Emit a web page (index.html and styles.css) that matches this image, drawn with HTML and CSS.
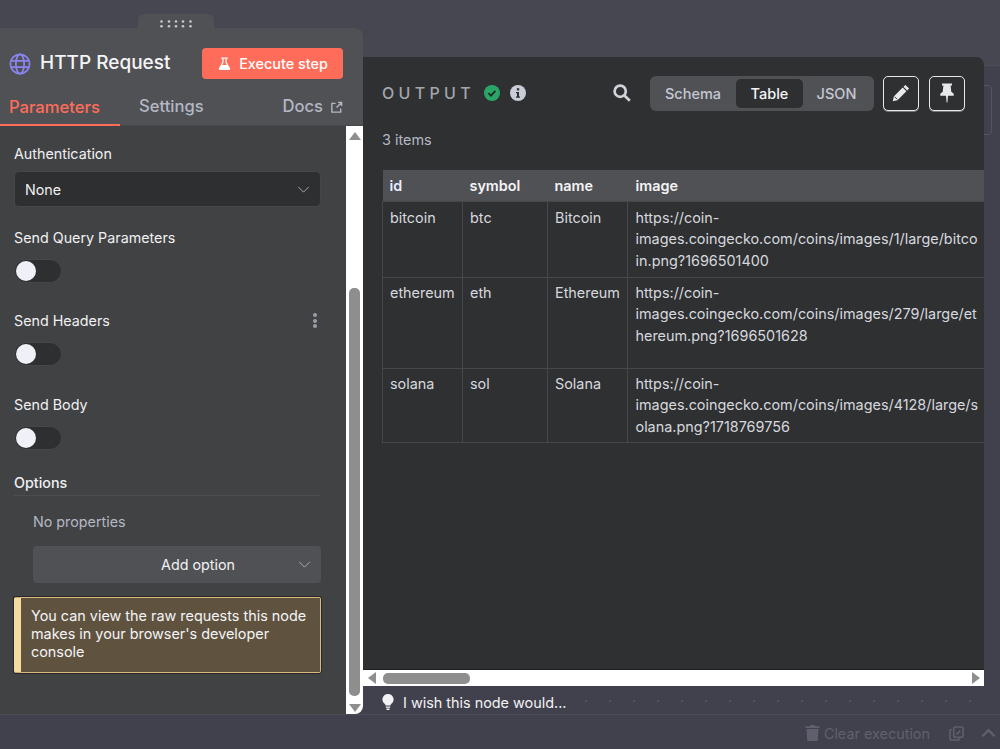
FILE: index.html
```html
<!DOCTYPE html>
<html lang="en">
<head>
<meta charset="utf-8">
<title>HTTP Request</title>
<link rel="stylesheet" href="styles.css">
</head>
<body>
<div class="app">
  <div class="canvas">
    <div class="side-line"></div>
    <div class="side-box"></div>
    <aside class="params">
      <div class="handle"><svg viewBox="0 0 32 8" fill="#c8c9cf"><circle cx="1.500" cy="1.500" r="1.300"/><circle cx="9" cy="1.500" r="1.300"/><circle cx="16" cy="1.500" r="1.300"/><circle cx="23" cy="1.500" r="1.300"/><circle cx="30.500" cy="1.500" r="1.300"/><circle cx="1.500" cy="6.300" r="1.300"/><circle cx="9" cy="6.300" r="1.300"/><circle cx="16" cy="6.300" r="1.300"/><circle cx="23" cy="6.300" r="1.300"/><circle cx="30.500" cy="6.300" r="1.300"/></svg></div>
      <div class="params-card">
        <header class="params-head">
          <div class="title-row">
            <svg class="globe" viewBox="0 0 24 24" fill="none" stroke="#8a84f0" stroke-width="1.900"><circle cx="12" cy="12" r="10.500"/><ellipse cx="12" cy="12" rx="4.500" ry="10.500"/><path d="M2.800 8.500h18.400M2.800 15.500h18.400"/></svg>
            <h1>HTTP Request</h1>
            <button class="exec"><svg viewBox="0 0 16 16" fill="#fff"><path d="M4.500 1h7v1.500h-7z"/><path d="M5.700 2.500h1.300v3.800L5.500 9h5L9 6.300V2.500h1.300v3.500l3.600 6.400c.6 1.100-.1 2.100-1.300 2.100H3.400c-1.200 0-1.900-1-1.300-2.100L5.700 6z"/></svg>Execute step</button>
          </div>
          <nav class="tabs">
            <span class="tab active">Parameters</span>
            <span class="tab">Settings</span>
            <span class="tab docs">Docs <svg viewBox="0 0 14 14" fill="none" stroke="#b4b8c4" stroke-width="1.500"><path d="M6 2.500H2v9.500h9.500V8M7 7l5.500-5.500M8.500 1.500h4v4"/></svg></span>
          </nav>
        </header>
        <div class="params-body">
          <div class="form">
            <label class="label label-first">Authentication</label>
            <div class="select"><span>None</span><svg class="chev" viewBox="0 0 14 8" fill="none" stroke="#b4b8c4" stroke-width="1"><path d="M1 1l6 6 6-6"/></svg></div>
            <label class="label label-query">Send Query Parameters</label>
            <div class="switch"><i></i></div>
            <div class="label label-row">Send Headers<span class="kebab"><i></i><i></i><i></i></span></div>
            <div class="switch"><i></i></div>
            <label class="label label-body">Send Body</label>
            <div class="switch"><i></i></div>
            <div class="options-title">Options</div>
            <div class="no-props">No properties</div>
            <div class="add-option"><span>Add option</span><svg class="chev" viewBox="0 0 14 8" fill="none" stroke="#b4b8c4" stroke-width="1"><path d="M1 1l6 6 6-6"/></svg></div>
            <div class="notice">You can view the raw requests this node makes in your browser's developer console</div>
          </div>
          <div class="vscroll">
            <div class="arrow-up"></div>
            <div class="vtrack"><div class="vthumb"></div></div>
            <div class="arrow-down"></div>
          </div>
        </div>
      </div>
    </aside>
    <main class="right">
      <section class="output">
        <div class="out-head">
          <span class="out-title">OUTPUT</span>
          <svg class="status" viewBox="0 0 16 16"><circle cx="8" cy="8" r="8" fill="#2aa568"/><path d="M4.500 8.200l2.400 2.400 4.500-4.800" fill="none" stroke="#1f2a24" stroke-width="1.800"/></svg>
          <svg class="status info" viewBox="0 0 16 16"><circle cx="8" cy="8" r="8" fill="#c9cdd8"/><rect x="6.900" y="3.200" width="2.300" height="2.300" fill="#2e2f31"/><path d="M6 7h3v4.500h1v1.200H6v-1.200h1V8.200H6z" fill="#2e2f31"/></svg>
          <svg class="search" viewBox="0 0 18 18" fill="none" stroke="#d0d3da" stroke-width="2.700"><circle cx="7.200" cy="7.200" r="5.600"/><path d="M11.200 11.200L16.800 16.800"/></svg>
          <div class="segment"><span>Schema</span><span class="on">Table</span><span>JSON</span></div>
          <button class="icon-btn"><svg class="pencil" viewBox="0 0 16 16" fill="#e8e9ec"><path d="M11.900.800l3.300 3.300-1.700 1.700-3.300-3.300zM9.500 3.200l3.300 3.300-7.900 7.900-4.200.9.900-4.200z"/><path d="M2.300 11.300l2.400 2.400" stroke="#2e2f31" stroke-width=".8" fill="none"/></svg></button>
          <button class="icon-btn"><svg class="pin" viewBox="0 0 16 20" fill="#e8e9ec"><path d="M3 .500h10v2h-1.400l.7 6.300 2.400 2v1.900H9l-.6 6.800h-.8L7 12.700H1.300v-1.900l2.400-2 .7-6.300H3z"/></svg></button>
        </div>
        <div class="count">3 items</div>
        <div class="table-wrap">
          <table>
            <thead><tr><th class="c1">id</th><th class="c2">symbol</th><th class="c3">name</th><th class="c4">image</th></tr></thead>
            <tbody>
              <tr class="r1"><td>bitcoin</td><td>btc</td><td>Bitcoin</td><td>https://coin-<br>images.coingecko.com/coins/images/1/large/bitco<br>in.png?1696501400</td></tr>
              <tr class="r2"><td>ethereum</td><td>eth</td><td>Ethereum</td><td>https://coin-<br>images.coingecko.com/coins/images/279/large/et<br>hereum.png?1696501628</td></tr>
              <tr class="r3"><td>solana</td><td>sol</td><td>Solana</td><td>https://coin-<br>images.coingecko.com/coins/images/4128/large/s<br>olana.png?1718769756</td></tr>
            </tbody>
          </table>
        </div>
        <div class="hscroll">
          <div class="arrow-left"></div>
          <div class="htrack"><div class="hthumb"></div></div>
          <div class="arrow-right"></div>
        </div>
      </section>
      <div class="wish">
        <svg viewBox="0 0 12 16" fill="#f2f2f4"><path d="M6 0a5.500 5.500 0 0 1 3.200 10c-.5.400-.7.900-.8 1.500H3.600c-.1-.6-.3-1.100-.8-1.500A5.500 5.500 0 0 1 6 0zM3.800 12.500h4.400v1.300H3.800zM4.500 14.500h3V16h-3z"/></svg>
        <span>I wish this node would...</span>
        <div class="dots"></div>
      </div>
    </main>
  </div>
  <footer class="footer">
    <svg class="trash" viewBox="0 0 14 16" fill="#5f606d"><path d="M5 0h4l.6 1.200H14v1.800H0V1.200h4.400zM1 4h12l-.8 12H1.800z"/></svg>
    <span class="clear">Clear execution</span>
    <svg class="copy" viewBox="0 0 16 16" fill="none" stroke="#5f606d" stroke-width="1.700"><rect x="5" y="1" width="10" height="11" rx="2"/><path d="M3 4H2a1 1 0 0 0-1 1v9a1 1 0 0 0 1 1h8a1 1 0 0 0 1-1v-1M8 9l4-4"/></svg>
    <svg class="caret" viewBox="0 0 16 10" fill="none" stroke="#5f606d" stroke-width="2.400"><path d="M1.500 8.500L8 2l6.500 6.500"/></svg>
  </footer>
</div>
</body>
</html>
```
FILE: styles.css
```css
* { box-sizing: border-box; }
html, body { margin: 0; padding: 0; }
body {
  width: 1000px; height: 749px; overflow: hidden;
  font-family: Inter, "Liberation Sans", sans-serif;
  background: #41414d; color: #f0f0f2;
}
.app { display: flex; flex-direction: column; height: 749px; }
.canvas {
  position: relative; display: flex; height: 714px;
  background: linear-gradient(#474752 65px, #41414d 65px);
}
.side-line { position: absolute; left: 984px; top: 65px; width: 16px; height: 1px; background: #4c4c59; }
.side-box {
  position: absolute; left: 978px; top: 85px; width: 14px; height: 50px;
  border: 1px solid #555562; border-radius: 4px;
}

/* left panel */
.params { width: 363px; padding-top: 14px; display: flex; flex-direction: column; flex: none; }
.handle {
  align-self: flex-start; margin-left: 138px; width: 76px; height: 14px;
  background: #505155; border-radius: 6px 6px 0 0;
  display: flex; justify-content: center; align-items: flex-end; padding-bottom: 0;
}
.handle svg { width: 32px; height: 8px; }
.params-card { flex: 1; display: flex; flex-direction: column; border-radius: 0 8px 0 0; overflow: hidden; background: #414244; }
.params-head { height: 98px; background: #505155; display: flex; flex-direction: column; border-bottom: 1px solid #46474a; }
.title-row { display: flex; align-items: center; height: 68px; padding: 3px 20px 0 9px; flex: none; }
.globe { width: 22px; height: 22px; flex: none; }
h1 { margin: 0 0 2px 9px; font-size: 19px; font-weight: 500; color: #f4f4f6; flex: 1; white-space: nowrap; }
.exec {
  width: 141px; height: 31px; border: 0; border-radius: 4px; background: #ff6d5a; color: #fff;
  font: 500 14.400px Inter, sans-serif; display: flex; align-items: center; justify-content: center; gap: 7px; padding: 0;
}
.exec svg { width: 15px; height: 16px; }
.tabs { flex: 1; display: flex; align-items: stretch; padding-right: 20px; font-size: 16.600px; font-weight: 500; color: #b4b8c4; }
.tab { display: flex; align-items: center; padding-bottom: 9px; }
.tab.active { width: 120px; padding-left: 9px; padding-bottom: 7px; color: #ff6d5a; border-bottom: 2px solid #ff6d5a; margin-bottom: -1px; }
.tab:nth-child(2) { margin-left: 19px; }
.docs { margin-left: auto; gap: 7px; }
.docs svg { width: 13px; height: 13px; margin-top: 2px; }
.params-body { flex: 1; display: flex; min-height: 0; }
.form { flex: 1; padding: 0 25px 0 14px; font-size: 14.300px; }
.label { display: flex; font-weight: 400; line-height: 17px; color: #f0f0f2; }
.label-first { margin-top: 19px; }
.select {
  margin-top: 9px; height: 36px; background: #2e2f30; border: 1px solid #46474a; border-radius: 5px;
  display: flex; align-items: center; justify-content: space-between; padding: 0 10px 0 10px; color: #f0f0f2;
}
.chev { width: 13px; height: 7px; }
.label-query { margin-top: 22px; }
.switch { margin-top: 13px; width: 48px; height: 24px; border-radius: 12px; background: #2e2f30; border: 1px solid #46474a; padding: 1px; }
.switch i { display: block; width: 20px; height: 20px; border-radius: 50%; background: #f0f0f8; }
.label-row { margin-top: 29px; justify-content: space-between; align-items: center; position: relative; }
.kebab { display: flex; flex-direction: column; gap: 1.500px; padding-right: 4px; }
.kebab i { width: 4px; height: 4px; border-radius: 50%; background: #9a9da8; }
.label-body { margin-top: 30px; }
.options-title { margin-top: 24px; padding-bottom: 4px; line-height: 17px; font-weight: 500; border-bottom: 1px solid #4c4d50; }
.no-props { margin: 17px 0 0 19px; line-height: 17px; color: #b4b8c4; }
.add-option {
  margin: 16px 0 0 19px; height: 37px; background: #505155; border-radius: 4px; position: relative;
  display: flex; align-items: center; justify-content: center; padding-left: 42px; color: #f0f0f2; font-weight: 400;
}
.add-option .chev { position: absolute; right: 10px; top: 15px; }
.notice {
  margin-top: 14px; height: 76px; padding: 9px 8px 0 10px;
  background: #5f5340; border: 1px solid #d9b97c; border-left: 7px solid #f6dba0; border-radius: 2px;
  font-size: 14.400px; line-height: 18px; color: #f4f4f6; box-shadow: 0 0 0 1px #26272a;
}
.vscroll { width: 17px; background: #fff; border-radius: 0 0 8px 0; display: flex; flex-direction: column; align-items: center; padding: 6px 0 2px; flex: none; }
.vtrack { flex: 1; width: 100%; display: flex; flex-direction: column; justify-content: flex-end; padding: 5px 3px 8px; }
.vthumb { width: 11px; height: 408px; background: #8e8e8e; border-radius: 5px; }
.arrow-up { width: 0; height: 0; border: 6px solid transparent; border-top: 0; border-bottom: 8px solid #8e8e8e; }
.arrow-down { width: 0; height: 0; border: 6px solid transparent; border-bottom: 0; border-top: 8px solid #8e8e8e; }

/* right panel */
.right { flex: none; width: 621px; padding-top: 57px; display: flex; flex-direction: column; position: relative; }
.output { height: 629px; background: #2f3032; border-radius: 0 8px 0 0; display: flex; flex-direction: column; }
.out-head { display: flex; align-items: center; height: 55px; padding: 17px 0 0 19px; position: relative; }
.out-title { font-size: 16px; font-weight: 500; letter-spacing: 4.300px; color: #a3a6ad; width: 102px; }
.status { width: 16px; height: 16px; flex: none; }
.info { margin-left: 10px; }
.search { width: 18px; height: 18px; margin-left: 87px; flex: none; }
.segment {
  margin-left: 19px; width: 224px; height: 35px; background: #505155; border-radius: 6px;
  display: grid; grid-template-columns: 86px 67px 67px; align-items: center; text-align: center;
  font-size: 14.500px; font-weight: 500; color: #c4c7d0; padding: 0; flex: none;
}
.segment span { line-height: 29px; }
.segment .on { background: #2e2f30; color: #f4f4f6; border-radius: 5px; }
.icon-btn {
  width: 36px; height: 35px; margin-left: 9px; background: #2f3032; border: 1px solid #e8e9ec;
  border-radius: 5px; display: flex; align-items: center; justify-content: center; padding: 0; flex: none;
  box-shadow: 0 1px 0 #777;
}
.icon-btn + .icon-btn { margin-left: 10px; }
.pencil { width: 18px; height: 18px; }
.pin { width: 16px; height: 22px; }
.count { margin: 19px 0 0 19px; height: 39px; line-height: 17px; font-size: 14.400px; color: #b4b8c4; }
.table-wrap { flex: 1; min-height: 0; overflow: hidden; padding-left: 19px; }
table { border-collapse: collapse; table-layout: fixed; width: 602px; font-size: 14.400px; line-height: 21.500px; }
.c1 { width: 80px; } .c2 { width: 85px; } .c3 { width: 80px; } .c4 { width: 357px; }
th { height: 31px; background: #505155; text-align: left; padding: 0 7px; font-weight: 600; color: #f4f4f6; }
th.c1 { color: #e6f0ff; }
td { vertical-align: top; padding: 5px 7px; color: #d6d8de; border: 1px solid #46474a; white-space: nowrap; overflow: hidden; }
th:last-child { padding-left: 8px; }
td:last-child { padding-left: 7.500px; border-right: 0; }
.r1 { height: 76px; }
.r2 { height: 91px; }
.r3 { height: 74px; }
.r2 td { padding-top: 4px; }
.r3 td { padding-top: 4px; }
.hscroll { height: 17px; background: #fff; display: flex; align-items: center; padding: 0 4px 0 5px; border-top: 1px solid #1f2022; flex: none; }
.arrow-left { width: 0; height: 0; border: 6px solid transparent; border-left: 0; border-right: 8px solid #8e8e8e; }
.arrow-right { width: 0; height: 0; border: 6px solid transparent; border-right: 0; border-left: 8px solid #8e8e8e; }
.htrack { flex: 1; padding-left: 7px; }
.hthumb { width: 87px; height: 11px; background: #8e8e8e; border-radius: 5px; }
.wish { flex: 1; display: flex; align-items: center; padding: 4px 0 0 19px; gap: 9px; font-size: 14.400px; color: #f2f2f4; }
.wish svg { width: 12px; height: 16px; }
.dots {
  flex: 1; align-self: stretch; margin-top: -4px;
  background-image: radial-gradient(circle, #515160 0.7px, transparent 1px);
  background-size: 24px 24px;
  background-position: -1px 3px;
}

/* footer */
.footer {
  height: 35px; background: #41414d; border-top: 1px solid #4c4c59;
  display: flex; align-items: center; justify-content: flex-end; padding: 2px 4px 0 0; color: #5f606d; font-size: 14.400px;
}
.trash { width: 15px; height: 16px; margin-right: 4px; }
.clear { margin-right: 19px; }
.copy { width: 15px; height: 15px; margin-right: 17px; }
.caret { width: 15px; height: 10px; }
```
